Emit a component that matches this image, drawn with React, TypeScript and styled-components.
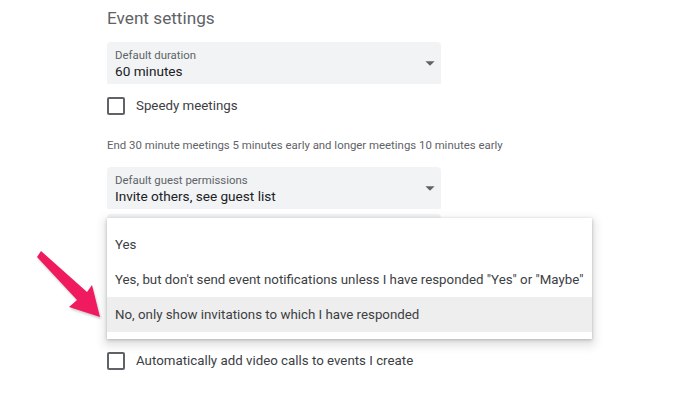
import React from 'react';
import styled, { createGlobalStyle } from 'styled-components';

const GlobalStyle = createGlobalStyle`
  body {
    margin: 0;
    background: #fff;
    font-family: Roboto, 'Noto Sans', Arial, sans-serif;
  }
`;

const Page = styled.div`
  position: relative;
  width: 680px;
  height: 396px;
  overflow: hidden;
  padding: 6px 0 0 107px;
  box-sizing: border-box;
  display: flex;
  flex-direction: column;
  align-items: flex-start;
`;

const Heading = styled.h2`
  margin: 0;
  font-size: 17.2px;
  line-height: 24px;
  font-weight: 400;
  color: #5f6368;
`;

const Field = styled.div`
  position: relative;
  margin-top: ${(p) => p.gap}px;
`;

const Select = styled.div`
  width: 334px;
  height: 42px;
  box-sizing: border-box;
  padding: 6px 0 4px 8px;
  background: #f1f3f4;
  border-radius: 4px 4px 0 0;
  display: flex;
  align-items: center;
`;

const SelectText = styled.div`
  flex: 1;
  display: flex;
  flex-direction: column;
`;

const SelectLabel = styled.span`
  font-size: 11.4px;
  line-height: 14px;
  color: #5f6368;
`;

const SelectValue = styled.span`
  font-size: 13.6px;
  line-height: 18px;
  color: #202124;
`;

const Caret = styled.svg`
  width: 22px;
  height: 22px;
  fill: #5f6368;
  margin-top: -2px;
`;

const CheckRow = styled.label`
  display: flex;
  align-items: center;
  gap: 11px;
  margin-top: ${(p) => p.gap}px;
  font-size: 13.3px;
  line-height: 18px;
  color: #3c4043;
`;

const Box = styled.span`
  width: 18px;
  height: 18px;
  box-sizing: border-box;
  border: 2px solid #5f6368;
  border-radius: 2px;
`;

const Hint = styled.p`
  margin: 22px 0 0;
  font-size: 11.4px;
  line-height: 16px;
  color: #5f6368;
`;

const Menu = styled.ul`
  position: absolute;
  top: 4px;
  left: 0;
  width: 485px;
  margin: 0;
  padding: 9px 0 7px;
  list-style: none;
  background: #fff;
  box-shadow: 0 4px 8px 3px rgba(60, 64, 67, 0.15),
    0 1px 3px rgba(60, 64, 67, 0.3);
  z-index: 2;
`;

const Option = styled.li`
  height: 35px;
  padding-left: 8px;
  display: flex;
  align-items: center;
  font-size: 13.3px;
  white-space: nowrap;
  color: #3c4043;
  background: ${(p) => (p.active ? '#eeeeee' : 'transparent')};
`;

const Pointer = styled.svg`
  position: absolute;
  left: 30px;
  top: 245px;
  width: 80px;
  height: 80px;
  filter: drop-shadow(1px 2px 1px rgba(0, 0, 0, 0.2));
  z-index: 3;
`;

const DropCaret = () => (
  <Caret viewBox="0 0 24 24">
    <path d="M7 10l5 5 5-5z" />
  </Caret>
);

const options = [
  'Yes',
  'Yes, but don\'t send event notifications unless I have responded "Yes" or "Maybe"',
  'No, only show invitations to which I have responded',
];

export default function App() {
  return (
    <>
      <GlobalStyle />
      <Page>
        <Heading>Event settings</Heading>

        <Field gap={12}>
          <Select>
            <SelectText>
              <SelectLabel>Default duration</SelectLabel>
              <SelectValue>60 minutes</SelectValue>
            </SelectText>
            <DropCaret />
          </Select>
        </Field>

        <CheckRow gap={13}>
          <Box />
          Speedy meetings
        </CheckRow>

        <Hint>End 30 minute meetings 5 minutes early and longer meetings 10 minutes early</Hint>

        <Field gap={14}>
          <Select>
            <SelectText>
              <SelectLabel>Default guest permissions</SelectLabel>
              <SelectValue>Invite others, see guest list</SelectValue>
            </SelectText>
            <DropCaret />
          </Select>
        </Field>

        {/* select whose open menu hides it */}
        <Field gap={5}>
          <Select />
          <Menu>
            {options.map((o, i) => (
              <Option key={o} active={i === 2}>
                {o}
              </Option>
            ))}
          </Menu>
        </Field>

        <CheckRow gap={96}>
          <Box />
          Automatically add video calls to events I create
        </CheckRow>

        <Pointer viewBox="30 245 80 80">
          <polygon
            points="37,257 41,251 87,292 92,285 100,317 69,307 77,300"
            fill="#ef1b5e"
          />
        </Pointer>
      </Page>
    </>
  );
}
